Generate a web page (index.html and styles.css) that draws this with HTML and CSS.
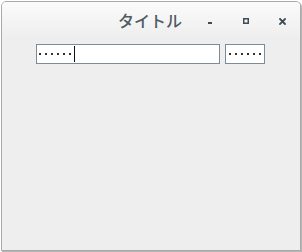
FILE: index.html
```html
<!DOCTYPE html>
<html>
<head>
<meta charset="utf-8">
<link rel="stylesheet" href="styles.css">
</head>
<body>
<div class="window">
  <div class="titlebar">
    <span class="title">タイトル</span>
    <span class="btn btn-min"><svg width="4" height="2" viewBox="0 0 4 2"><rect width="4" height="2" fill="#3d4c56"/></svg></span>
    <span class="btn btn-max"><svg width="6" height="6" viewBox="0 0 6 6"><rect x="0.75" y="0.75" width="4.5" height="4.5" fill="none" stroke="#3d4c56" stroke-width="1.5"/></svg></span>
    <span class="btn btn-close"><svg width="7" height="7" viewBox="0 0 7 7"><path d="M1 1L6 6M6 1L1 6" stroke="#3d4c56" stroke-width="1.8" stroke-linecap="square"/></svg></span>
  </div>
  <div class="content">
    <div class="field field-wide">
      <span class="dots"></span><span class="caret"></span>
    </div>
    <div class="field field-small">
      <span class="dots"></span>
    </div>
  </div>
</div>
</body>
</html>
```
FILE: styles.css
```css
html, body {
  margin: 0;
  padding: 0;
  background: #ffffff;
}
body {
  width: 302px;
  height: 252px;
  overflow: hidden;
}
.window {
  margin: 1px 0 0 1px;
  width: 298px;
  height: 248px;
  border: 1px solid #a9a9a9;
  border-radius: 5px 5px 0 0;
  background: #eeeeee;
  box-shadow: 1px 1px 0 #b5b5b5;
  overflow: hidden;
}
.titlebar {
  height: 36px;
  display: flex;
  align-items: center;
  padding-left: 116px;
  background: linear-gradient(#fbfbfb, #eeeeee);
}
.title {
  font-family: "Noto Sans CJK JP", sans-serif;
  font-size: 16px;
  font-weight: 500;
  color: #4e5b63;
  line-height: 20px;
  margin-top: -1px;
}
.btn {
  display: flex;
}
.btn svg {
  display: block;
}
.btn-min {
  margin-left: 26px;
  margin-top: 5px;
}
.btn-max {
  margin-left: 31px;
  margin-top: 2px;
}
.btn-close {
  margin-left: 30px;
  margin-top: 2px;
}
.content {
  display: flex;
  gap: 5px;
  padding: 6px 0 0 34px;
}
.field {
  box-sizing: border-box;
  height: 20px;
  border: 1px solid #7d8b97;
  background: #ffffff;
  display: flex;
  align-items: center;
}
.field-wide {
  width: 184px;
  padding-left: 2px;
}
.field-small {
  width: 40px;
  padding-left: 3px;
}
.dots {
  display: block;
  width: 34px;
  height: 2px;
  background: linear-gradient(to right, #333333 2px, transparent 2px) repeat-x;
  background-size: 6px 2px;
}
.field-small .dots {
  width: 32px;
}
.caret {
  display: block;
  width: 1px;
  height: 16px;
  background: #111111;
  margin-left: 1px;
}
```
